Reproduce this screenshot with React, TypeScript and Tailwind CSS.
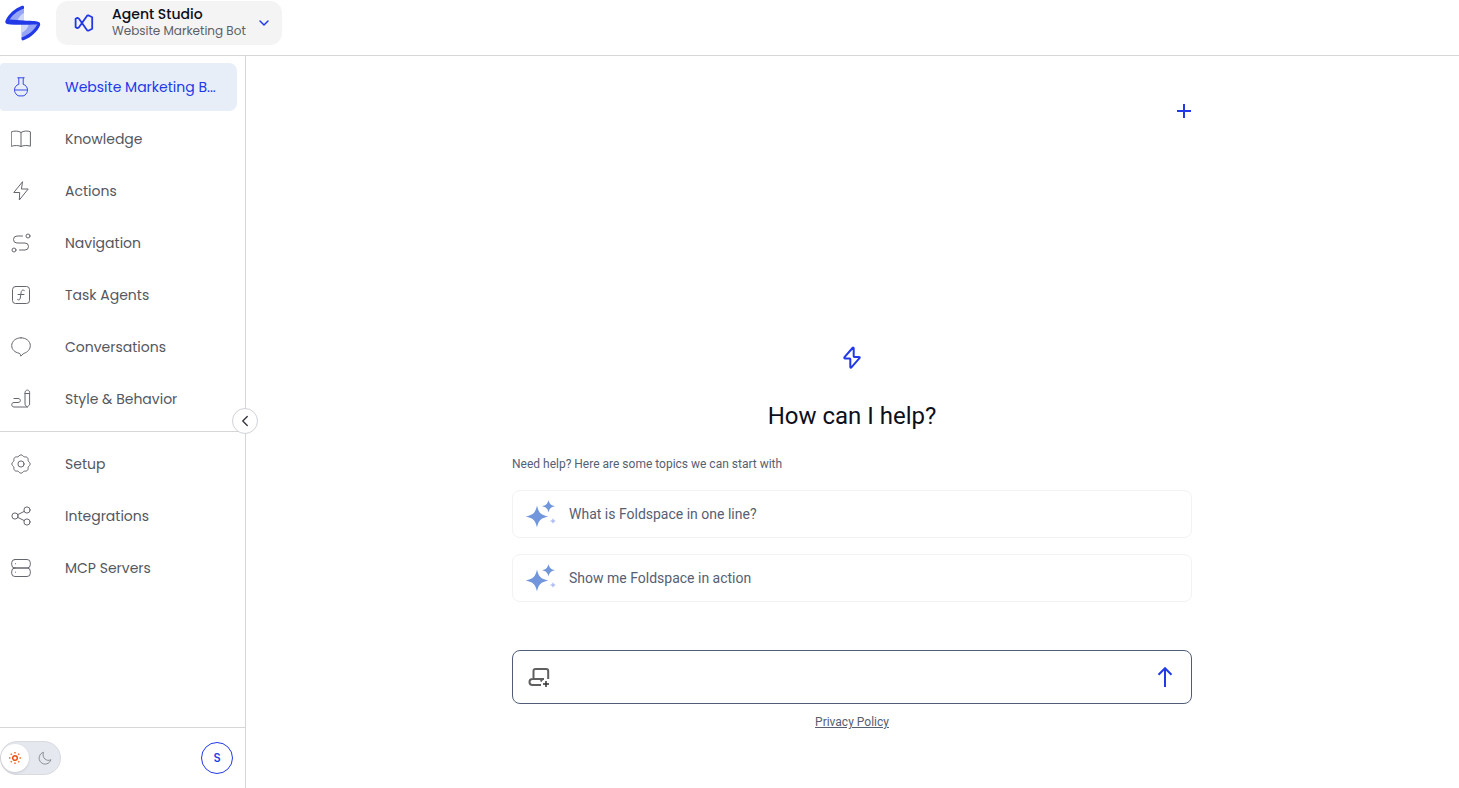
import { useState, type ReactNode } from "react";
import { ChevronDown, ChevronLeft } from "lucide-react";

interface NavEntry {
    label: string
    icon: ReactNode
}

function NavIcon({ children }: { children: ReactNode }) {
    return (
        <svg viewBox="0 0 20 20" className="h-5 w-5 shrink-0 opacity-90" fill="none" stroke="currentColor" strokeWidth="1" strokeLinecap="round" strokeLinejoin="round" aria-hidden="true">
            {children}
        </svg>
    )
}

const mainEntries: NavEntry[] = [
    {
        label: "Website Marketing B...",
        icon: <NavIcon><path d="M6.800.8h6.400M7.800.8v6.500C5.200 8.100 3.500 10.300 3.500 12.900c0 2 .9 3.700 2.500 5.100.6.600 1.200.9 2 .9h4c.8 0 1.400-.3 2-.9 1.600-1.400 2.500-3.100 2.500-5.100 0-2.600-1.700-4.800-4.300-5.600V.8M3.700 13h12.600" /></NavIcon>,
    },
    {
        label: "Knowledge",
        icon: <NavIcon><path d="M10 3.500v14M.6 2.800C3 1.600 7.800 1.800 10 3.500c2.200-1.700 7-1.900 9.400-.7v14.400c-3-1-7-.9-9.400.3-2.400-1.200-6.400-1.300-9.400-.3z" /></NavIcon>,
    },
    {
        label: "Actions",
        icon: <NavIcon><path d="M11.300 1 2.800 11.500h5.900L8.300 19l8.900-11h-6.400z" /></NavIcon>,
    },
    {
        label: "Navigation",
        icon: <NavIcon><circle cx="17" cy="3" r="2" /><circle cx="3" cy="17" r="2" /><path d="M11.500 3H6a3.500 3.500 0 0 0 0 7h8a3.500 3.500 0 0 1 0 7H8.500" /></NavIcon>,
    },
    {
        label: "Task Agents",
        icon: <NavIcon><rect x="1.500" y="1.500" width="17" height="17" rx="3" /><path d="M13.300 5.500c-2-1.300-3 .2-3.200 2L9.300 13c-.3 2-1.500 2.500-2.700 1.500M7 9.500h6" /></NavIcon>,
    },
    {
        label: "Conversations",
        icon: <NavIcon><path d="M10 .8C4.800.8.700 4.200.7 8.600c0 3.900 3 6.700 7.300 7.600.8.200 1.100.6 1.300 1.200l.5 1.700 2.300-2.200c.3-.3.600-.5 1-.6 3.700-1.200 6.200-4.100 6.200-7.700C19.300 4.200 15.200.8 10 .8z" /></NavIcon>,
    },
    {
        label: "Style & Behavior",
        icon: <NavIcon><path d="M14 4.500v11.300L16.300 18l2.300-2.200V3.300c0-3-4.600-3-4.600 0zM14 4.500h4.600M3 9.500h4c3.200 0 3.200 4 0 4H3c-3 0-3 4.500 0 4.500h13.300" /></NavIcon>,
    },
]

const settingsEntries: NavEntry[] = [
    {
        label: "Setup",
        icon: <NavIcon><circle cx="10" cy="10" r="3.100" /><path d="M8.300 1.600c.9-1 2.500-1 3.400 0l.6.700c.4.400.9.600 1.400.6h1c1.300 0 2.400 1.100 2.400 2.400v1c0 .5.200 1 .6 1.400l.7.600c1 .9 1 2.500 0 3.400l-.7.600c-.4.400-.6.9-.6 1.400v1c0 1.300-1.100 2.400-2.400 2.400h-1c-.5 0-1 .2-1.400.6l-.6.700c-.9 1-2.500 1-3.400 0l-.6-.7c-.4-.4-.9-.6-1.400-.6h-1c-1.300 0-2.400-1.100-2.400-2.400v-1c0-.5-.2-1-.6-1.400l-.7-.6c-1-.9-1-2.500 0-3.400l.7-.6c.4-.4.600-.9.600-1.400v-1c0-1.300 1.100-2.400 2.400-2.400h1c.5 0 1-.2 1.400-.6z" /></NavIcon>,
    },
    {
        label: "Integrations",
        icon: <NavIcon><circle cx="4" cy="10" r="3.100" /><circle cx="16" cy="4" r="3.100" /><circle cx="16" cy="16" r="3.100" /><path d="m6.800 8.600 6.400-3.200M6.800 11.400l6.400 3.200" /></NavIcon>,
    },
    {
        label: "MCP Servers",
        icon: <NavIcon><rect x=".7" y="1.500" width="18.600" height="8.500" rx="3.200" /><rect x=".7" y="10" width="18.600" height="8.500" rx="3.200" /><path d="M4.500 5.700h.1M4.500 14.200h.1" /></NavIcon>,
    },
]

const topics = ["What is Foldspace in one line?", "Show me Foldspace in action"]

function Logo() {
    return (
        <svg viewBox="0 0 36 36" className="h-9 w-9" aria-hidden="true">
            <path d="M18 1C10 4 4 10 .7 16.500L19 18.500V3z" fill="#97a5f5" />
            <path d="M19 8c-3.500 2-5.500 4.500-6.500 8l6.500 1z" fill="#d0d7fc" />
            <path d="M17 .8C10 3.500 3 9.500.7 15.500c-.5 1.200-.2 2.300 1 2.800l2-2C6.500 10.500 12 6 19 3.500V2C19 .9 18 .4 17 .8z" fill="#2239e8" />
            <path d="M16.500 19v13c0 2 1 3 3 2.500L28 27l5-8z" fill="#97a5f5" />
            <path d="M16.500 19v9c4-2 6.500-5 7.500-9z" fill="#d0d7fc" />
            <path d="M18.500 35.300C26 32.500 32.500 26.500 35 20.500c.5-1.200.2-2.300-1-2.800l-2 2C29 25.500 24 29.500 16.500 32.500V34c0 1.100 1 1.700 2 1.300z" fill="#2239e8" />
            <path d="M2 14.700c4-.8 10.500.4 17 .9 5.500.4 11.500.4 14.500 1.300 1.800.6 2 2 1 3.300-2-1-6-.6-10-.4-6 .2-13-.2-19-.4-3-.1-5-.6-5-2.200 0-1.300.5-2.200 1.500-2.500z" fill="#2239e8" />
        </svg>
    )
}

function StudioIcon() {
    return (
        <svg viewBox="0 0 20 20" className="h-5 w-5" fill="none" stroke="currentColor" strokeWidth="1.800" strokeLinejoin="round" strokeLinecap="round" aria-hidden="true">
            <path d="M1.600 5.800 3.400 4.900l1.400.6 8.300 11.800 1.200.4 3.900-2V4.300l-3.900-2-1.200.4L4.800 14.500l-1.400.6-1.800-.9z" />
        </svg>
    )
}

function Sparkles() {
    return (
        <svg viewBox="0 0 32 32" className="h-8 w-8 shrink-0" aria-hidden="true">
            <path d="M12 7.500c1.600 7.200 3.700 9.400 11.200 11-7.500 1.600-9.600 3.800-11.200 11-1.600-7.200-3.700-9.400-11.200-11 7.500-1.600 9.600-3.800 11.200-11z" fill="#7296dc" />
            <path d="M23.500 2c1 4 2.500 5.400 6.500 6.200-4 .8-5.500 2.200-6.500 6.200-1-4-2.500-5.400-6.500-6.200 4-.8 5.500-2.200 6.500-6.200z" fill="#7296dc" />
            <path d="M28 20c.6 2 1.200 2.500 3 3-1.800.5-2.400 1-3 3-.6-2-1.200-2.500-3-3 1.800-.5 2.400-1 3-3z" fill="#b2bff3" />
        </svg>
    )
}

function NavList({ entries, active }: { entries: NavEntry[], active?: string }) {
    return (
        <ul className="flex flex-col gap-1">
            {entries.map((entry) => (
                <li key={entry.label}>
                    <a
                        href="#"
                        aria-current={entry.label === active ? "page" : undefined}
                        className={`flex h-12 items-center gap-[34px] rounded-l rounded-r-lg pl-[11px] pr-4 text-sm ${entry.label === active ? "bg-[#e7eef8] text-[#2239e8]" : "text-[#54575f] hover:bg-gray-50"}`}
                    >
                        {entry.icon}
                        <span className="whitespace-nowrap">{entry.label}</span>
                    </a>
                </li>
            ))}
        </ul>
    )
}

function Header() {
    return (
        <header className="flex h-14 shrink-0 items-start gap-[15px] border-b border-[#d6d6d6] pl-[5px]">
            <a href="#" aria-label="Foldspace" className="mt-[5px]"><Logo /></a>
            <button className="mt-px flex h-11 items-center rounded-xl bg-[#f4f4f4] pl-[18px] pr-2.5 text-left text-[#2239e8]">
                <StudioIcon />
                <span className="ml-[18px] flex flex-col">
                    <span className="text-sm leading-4 font-medium text-[#0d0f1a]">Agent Studio</span>
                    <span className="text-xs leading-[18px] text-[#5c6068]">Website Marketing Bot</span>
                </span>
                <ChevronDown className="ml-2.5 h-4 w-4" strokeWidth={2.2} />
            </button>
        </header>
    )
}

function Sidebar() {
    const [dark, setDark] = useState(false)

    return (
        <aside className="relative flex w-[246px] shrink-0 flex-col border-r border-[#d6d6d6]">
            <nav className="flex-1">
                <div className="pt-[7px] pr-2 pb-2">
                    <NavList entries={mainEntries} active="Website Marketing B..." />
                </div>
                <div className="border-t border-[#d6d6d6] py-2 pr-2">
                    <NavList entries={settingsEntries} />
                </div>
            </nav>
            <button aria-label="Collapse sidebar" className="absolute top-[352px] -right-[13px] flex h-[26px] w-[26px] items-center justify-center rounded-full border border-[#d0d2d8] bg-white text-[#33363d]">
                <ChevronLeft className="h-[18px] w-[18px]" strokeWidth={1.8} />
            </button>
            <div className="flex items-center justify-between border-t border-[#d6d6d6] py-[13px] pr-3">
                <button
                    role="switch"
                    aria-checked={dark}
                    aria-label="Dark mode"
                    onClick={() => setDark(!dark)}
                    className="flex h-[34px] w-[61px] items-center rounded-full border border-[#d8dade] bg-[#e6e8f0]"
                >
                    <span className="flex h-7 w-7 items-center justify-center rounded-full bg-white shadow">
                        <svg viewBox="0 0 14 14" className="h-3.5 w-3.5" fill="none" stroke="#f26a2e" strokeWidth="1.500" aria-hidden="true">
                            <circle cx="7" cy="7" r="2.300" stroke="#ee4f13" />
                            <path d="M7 1v1.500M7 11.500V13M1 7h1.500M11.500 7H13M2.700 2.700l1.100 1.100M10.200 10.200l1.100 1.100M11.300 2.700l-1.100 1.100M3.800 10.200l-1.100 1.100" />
                        </svg>
                    </span>
                    <span className="flex flex-1 items-center justify-center text-[#8c8e93]">
                        <svg viewBox="0 0 14 14" className="h-3.5 w-3.5" fill="none" stroke="currentColor" strokeLinejoin="round" aria-hidden="true">
                            <path d="M5.500 1.300A6 6 0 1 0 12.900 8.700C9 11 3.500 7 5.500 1.300z" />
                        </svg>
                    </span>
                </button>
                <button aria-label="Account" className="h-8 w-8 rounded-full border border-[#2239e8] text-xs font-medium text-[#2239e8]">S</button>
            </div>
        </aside>
    )
}

function Chat() {
    const [message, setMessage] = useState("")

    return (
        <main className="flex min-w-0 flex-1 justify-center pr-[25px] pl-6 font-[Roboto,sans-serif]">
            <div className="flex w-full max-w-[680px] flex-col pt-[47px]">
                <button aria-label="New chat" className="flex h-4 w-4 items-center justify-center self-end text-[#2239e8]">
                    <svg viewBox="0 0 16 16" className="h-4 w-4" stroke="currentColor" strokeWidth="2" aria-hidden="true">
                        <path d="M8 1v14M1 8h14" />
                    </svg>
                </button>
                <div className="flex flex-1 flex-col justify-end">
                    <svg viewBox="0 0 24 24" className="h-6 w-6 self-center" fill="none" stroke="#2239e8" strokeWidth="2" strokeLinejoin="round" aria-hidden="true">
                        <path d="M12.500 2 4.500 11.200c-.5.700-.2 1.200.6 1.200h4.600c.4 0 .6.2.6.600V21c0 .8.600.9 1.100.3l8.100-9.200c.5-.7.200-1.200-.6-1.200h-4.600c-.4 0-.6-.2-.6-.6V2.300c0-.8-.7-.9-1.200-.3z" />
                    </svg>
                    <h1 className="mt-7 text-center text-2xl leading-9 text-[#0d0f1a]">How can I help?</h1>
                    <p className="mt-5 text-xs leading-5 text-[#566072]">Need help? Here are some topics we can start with</p>
                    <div className="mt-4 flex flex-col gap-4">
                        {topics.map((topic) => (
                            <button key={topic} onClick={() => setMessage(topic)} className="flex h-12 items-center gap-3 rounded-lg border border-[#f1f2f4] px-3 text-left text-sm text-[#566072]">
                                <Sparkles />
                                {topic}
                            </button>
                        ))}
                    </div>
                </div>
                <form onSubmit={(e) => e.preventDefault()} className="mt-12 flex h-[54px] items-center rounded-lg border border-[#4f5d78] px-[15px]">
                    <button type="button" aria-label="Attach page" className="text-[#5f5f5f]">
                        <svg viewBox="0 0 22 22" className="h-[22px] w-[22px]" fill="none" stroke="currentColor" strokeWidth="2" strokeLinejoin="round" aria-hidden="true">
                            <path d="M5.500 13V5C5.500 3.700 6.200 3 7.500 3h10.700c1.300 0 2 .7 2 2v8M16 13H4.500a3 3 0 0 0 0 6H13M14.500 13 12.700 15.500" />
                            <path d="M18 15v6M15 18h6" stroke="#333" strokeWidth="1.500" />
                        </svg>
                    </button>
                    <input aria-label="Message" value={message} onChange={(e) => setMessage(e.target.value)} className="min-w-0 flex-1 px-4 text-sm outline-none" />
                    <button type="submit" aria-label="Send" className="text-[#2239e8]">
                        <svg viewBox="0 0 22 22" className="h-[22px] w-[22px]" fill="none" stroke="currentColor" strokeWidth="2" aria-hidden="true">
                            <path d="M11 21V2.500M4.500 8.700 11 2.200l6.500 6.500" />
                        </svg>
                    </button>
                </form>
                <a href="#" className="mt-2 mb-14 self-center text-xs leading-5 text-[#566072] underline">Privacy Policy</a>
            </div>
        </main>
    )
}

export default function App() {
    return (
        <div className="flex min-h-screen flex-col bg-white font-[Poppins,Inter,sans-serif]">
            <Header />
            <div className="flex flex-1">
                <Sidebar />
                <Chat />
            </div>
        </div>
    )
}
